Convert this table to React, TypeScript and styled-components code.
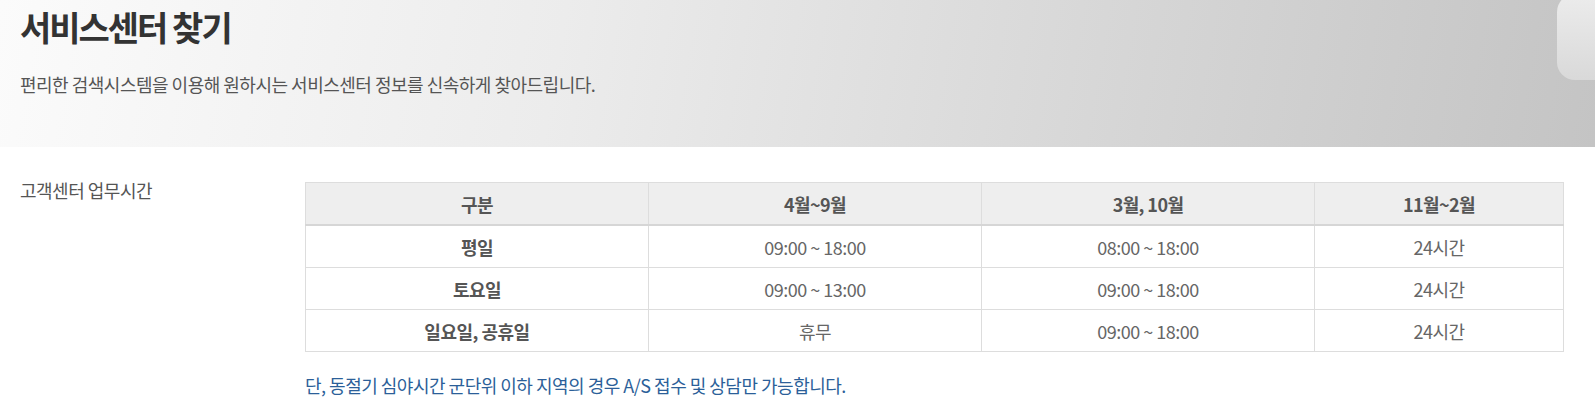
import React from "react";
import styled, { createGlobalStyle } from "styled-components";

const GlobalStyle = createGlobalStyle`
  html, body {
    margin: 0;
    padding: 0;
    background: #fff;
  }
  body {
    font-family: "Noto Sans CJK KR", "Noto Sans", sans-serif;
    color: #555;
  }
`;

const columns = ["구분", "4월~9월", "3월, 10월", "11월~2월"];

const rows = [
  { label: "평일", cells: ["09:00 ~ 18:00", "08:00 ~ 18:00", "24시간"] },
  { label: "토요일", cells: ["09:00 ~ 13:00", "09:00 ~ 18:00", "24시간"] },
  { label: "일요일, 공휴일", cells: ["휴무", "09:00 ~ 18:00", "24시간"] },
];

const App = () => {
  return (
    <>
      <GlobalStyle />
      <S.Page>
        <S.Hero>
          <S.Title>서비스센터 찾기</S.Title>
          <S.Lead>편리한 검색시스템을 이용해 원하시는 서비스센터 정보를 신속하게 찾아드립니다.</S.Lead>
          <S.Tab />
        </S.Hero>
        <S.Section>
          <S.Label>고객센터 업무시간</S.Label>
          <S.Body>
            <S.Table>
              <colgroup>
                <col style={{ width: 343 }} />
                <col style={{ width: 333 }} />
                <col style={{ width: 333 }} />
                <col />
              </colgroup>
              <thead>
                <tr>
                  {columns.map((c) => (
                    <S.Th key={c}>{c}</S.Th>
                  ))}
                </tr>
              </thead>
              <tbody>
                {rows.map((r) => (
                  <tr key={r.label}>
                    <S.Td $head>{r.label}</S.Td>
                    {r.cells.map((c, i) => (
                      <S.Td key={i}>{c}</S.Td>
                    ))}
                  </tr>
                ))}
              </tbody>
            </S.Table>
            <S.Note>단, 동절기 심야시간 군단위 이하 지역의 경우 A/S 접수 및 상담만 가능합니다.</S.Note>
          </S.Body>
        </S.Section>
      </S.Page>
    </>
  );
};

export default App;

const S = {
  Page: styled.div`
    width: 1595px;
    height: 413px;
    overflow: hidden;
  `,
  Hero: styled.header`
    position: relative;
    height: 147px;
    box-sizing: border-box;
    padding: 4px 20px 0;
    background: linear-gradient(100deg, #fbfbfb 0%, #ececec 35%, #d6d6d6 70%, #c4c4c4 100%);
  `,
  Title: styled.h1`
    margin: 0;
    font-size: 34px;
    font-weight: 700;
    line-height: 46px;
    letter-spacing: -2px;
    color: #333;
  `,
  Lead: styled.p`
    margin: 21px 0 0;
    font-size: 18px;
    line-height: 26px;
    letter-spacing: -0.5px;
    color: #555;
  `,
  Tab: styled.div`
    position: absolute;
    top: -6px;
    right: -20px;
    width: 58px;
    height: 86px;
    border-radius: 18px;
    background: linear-gradient(180deg, #ececec 0%, #d9d9d9 100%);
  `,
  Section: styled.section`
    display: flex;
    padding: 32px 31px 0 20px;
  `,
  Label: styled.h2`
    width: 285px;
    flex: none;
    margin: 0;
    font-size: 18px;
    font-weight: 400;
    line-height: 22px;
    letter-spacing: -0.5px;
    color: #555;
  `,
  Body: styled.div`
    flex: 1;
    padding-top: 3px;
  `,
  Table: styled.table`
    width: 1259px;
    border-collapse: collapse;
    table-layout: fixed;
    border: 1px solid #dddddd;
  `,
  Th: styled.th`
    height: 41px;
    padding: 0;
    background: #eeeeee;
    border: 1px solid #dddddd;
    border-bottom: 2px solid #d6d6d6;
    font-size: 18px;
    font-weight: 700;
    letter-spacing: -0.6px;
    color: #555;
    text-align: center;
  `,
  Td: styled.td<{ $head?: boolean }>`
    height: 41px;
    padding: 0;
    border: 1px solid #dddddd;
    font-size: 18px;
    font-weight: ${(p) => (p.$head ? 700 : 400)};
    letter-spacing: -0.5px;
    color: ${(p) => (p.$head ? "#555" : "#666")};
    text-align: center;
  `,
  Note: styled.p`
    margin: 20px 0 0;
    font-size: 18px;
    line-height: 26px;
    letter-spacing: -0.5px;
    color: #2c5f99;
  `,
};
